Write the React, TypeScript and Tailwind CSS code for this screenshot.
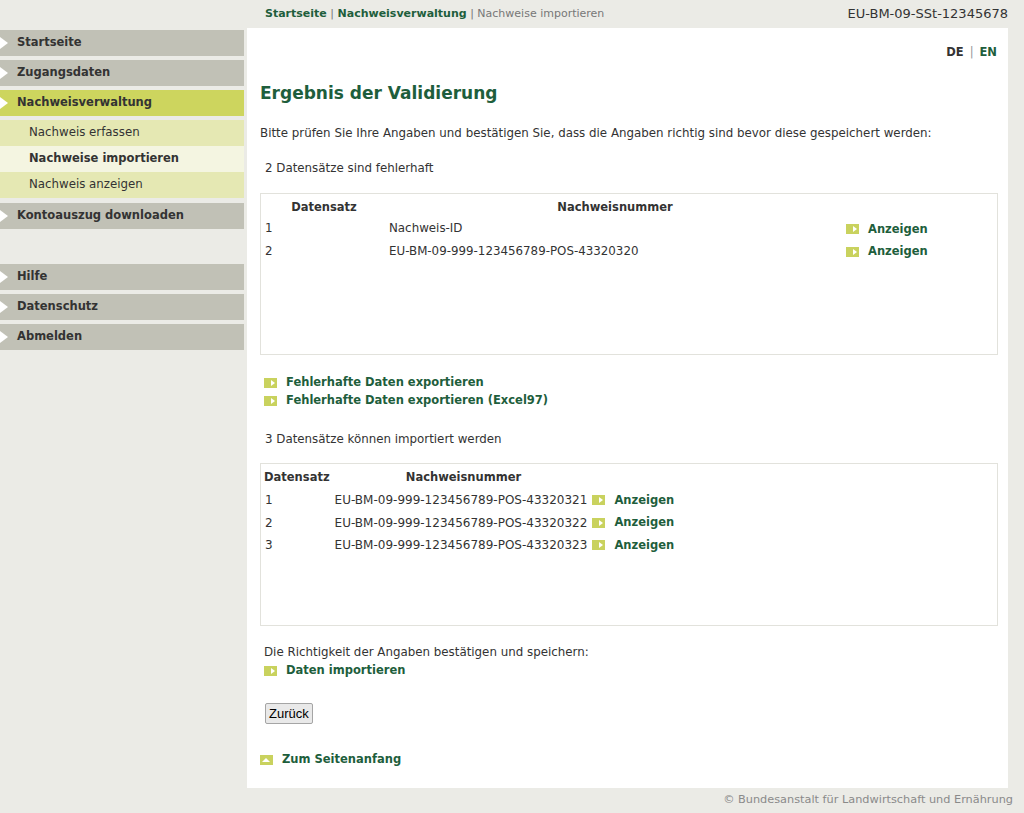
import React from 'react';

const navTop = ['Startseite', 'Zugangsdaten'];
const subItems = [
  { label: 'Nachweis erfassen', active: false },
  { label: 'Nachweise importieren', active: true },
  { label: 'Nachweis anzeigen', active: false },
];

function NavItem({ label, active }: { label: string; active?: boolean }) {
  return (
    <div
      className={`relative flex h-[26px] items-center pl-[17px] text-[11.5px] font-bold text-[#333] ${
        active ? 'bg-[#cdd55e]' : 'bg-[#c1c1b6]'
      }`}
    >
      {/* little white arrow at left edge */}
      <span className="absolute left-0 top-[7px] h-0 w-0 border-y-[6px] border-l-[8px] border-y-transparent border-l-white" />
      {label}
    </div>
  );
}

function ArrowIcon({ up }: { up?: boolean }) {
  return (
    <span className="inline-flex h-[10px] w-[13px] shrink-0 items-center justify-end bg-[#c9d25e] pr-[2px]">
      {up ? (
        <span className="mx-auto h-0 w-0 border-x-[4px] border-b-[4px] border-x-transparent border-b-white" />
      ) : (
        <span className="h-0 w-0 border-y-[3px] border-l-[4px] border-y-transparent border-l-white" />
      )}
    </span>
  );
}

function LinkItem({ label, up }: { label: string; up?: boolean }) {
  return (
    <div className="flex h-[18px] items-center gap-[9px] text-[11.5px] font-bold text-[#1e5e3c]">
      <ArrowIcon up={up} />
      <span>{label}</span>
    </div>
  );
}

const errorRows = [
  { n: '1', id: 'Nachweis-ID' },
  { n: '2', id: 'EU-BM-09-999-123456789-POS-43320320' },
];

const okRows = [
  { n: '1', id: 'EU-BM-09-999-123456789-POS-43320321' },
  { n: '2', id: 'EU-BM-09-999-123456789-POS-43320322' },
  { n: '3', id: 'EU-BM-09-999-123456789-POS-43320323' },
];

export default function App() {
  return (
    <div
      className="min-h-[813px] w-[1024px] bg-[#ebebe6] text-[11.85px] text-[#333]"
      style={{ fontFamily: '"DejaVu Sans", Verdana, sans-serif' }}
    >
      {/* Top bar */}
      <div className="flex h-[28px] items-center">
        <div className="w-[247px] shrink-0" />
        <div className="flex-1 pl-[18px] text-[11px]">
          <span className="font-bold text-[#1e5e3c]">Startseite</span>
          <span className="text-[#777]"> | </span>
          <span className="font-bold text-[#1e5e3c]">Nachweisverwaltung</span>
          <span className="text-[#777]"> | Nachweise importieren</span>
        </div>
        <div className="pr-[16px] text-[13px] text-[#333]">EU-BM-09-SSt-12345678</div>
      </div>

      <div className="flex">
        {/* Sidebar */}
        <div className="flex w-[244px] shrink-0 flex-col pt-[2px]">
          <div className="flex flex-col gap-[4px]">
            {navTop.map((l) => (
              <NavItem key={l} label={l} />
            ))}
            <NavItem label="Nachweisverwaltung" active />
          </div>
          <div className="mt-[4px] flex flex-col">
            {subItems.map((s) => (
              <div
                key={s.label}
                className={`flex h-[26px] items-center pl-[29px] ${
                  s.active
                    ? 'bg-[#f4f5e1] text-[11.5px] font-bold text-[#333]'
                    : 'bg-[#e5e8b3] text-[11.8px] text-[#333]'
                }`}
              >
                {s.label}
              </div>
            ))}
          </div>
          <div className="mt-[5px]">
            <NavItem label="Kontoauszug downloaden" />
          </div>
          <div className="mt-[35px] flex flex-col gap-[4px]">
            <NavItem label="Hilfe" />
            <NavItem label="Datenschutz" />
            <NavItem label="Abmelden" />
          </div>
        </div>

        {/* Main */}
        <div className="ml-[3px] h-[760px] w-[761px] bg-white pl-[13px] pr-[11px] pt-[17px]">
          <div className="flex h-[16px] items-center justify-end text-[11.5px] font-bold">
            <span className="text-[#333]">DE</span>
            <span className="mx-[6px] font-normal text-[#999]">|</span>
            <span className="text-[#1e5e3c]">EN</span>
          </div>

          <h1 className="mt-[20px] h-[24px] text-[17px] font-bold leading-[24px] text-[#1e5e3c]">
            Ergebnis der Validierung
          </h1>

          <p className="mt-[20px] leading-[16px]">
            Bitte prüfen Sie Ihre Angaben und bestätigen Sie, dass die Angaben richtig sind bevor diese gespeichert werden:
          </p>

          <p className="mt-[19px] pl-[5px] leading-[16px]">2 Datensätze sind fehlerhaft</p>

          <div className="mt-[17px] h-[162px] w-[738px] border border-[#e2e2dc] px-[2px] pt-[3px]">
            <table className="w-full table-fixed border-collapse">
              <colgroup>
                <col className="w-[122px]" />
                <col className="w-[460px]" />
                <col />
              </colgroup>
              <thead>
                <tr className="h-[21px]">
                  <th className="text-[11.5px] font-bold">Datensatz</th>
                  <th className="text-[11.5px] font-bold">Nachweisnummer</th>
                  <th />
                </tr>
              </thead>
              <tbody>
                {errorRows.map((r) => (
                  <tr key={r.n} className="h-[22.5px]">
                    <td className="pl-[2px] align-middle">{r.n}</td>
                    <td className="pl-[4px] align-middle">{r.id}</td>
                    <td className="pl-[1px] align-middle">
                      <LinkItem label="Anzeigen" />
                    </td>
                  </tr>
                ))}
              </tbody>
            </table>
          </div>

          <div className="mt-[19px] pl-[4px]">
            <LinkItem label="Fehlerhafte Daten exportieren" />
            <LinkItem label="Fehlerhafte Daten exportieren (Excel97)" />
          </div>

          <p className="mt-[21px] pl-[5px] leading-[16px]">3 Datensätze können importiert werden</p>

          <div className="mt-[16px] h-[163px] w-[738px] border border-[#e2e2dc] px-[3px] pt-[3px]">
            <table className="border-collapse">
              <thead>
                <tr className="h-[22px]">
                  <th className="pr-[5px] text-left text-[11.5px] font-bold">Datensatz</th>
                  <th className="text-[11.5px] font-bold">Nachweisnummer</th>
                  <th />
                </tr>
              </thead>
              <tbody>
                {okRows.map((r) => (
                  <tr key={r.n} className="h-[22.5px] text-[12px]">
                    <td className="pl-[1px] align-middle">{r.n}</td>
                    <td className="pr-[5px] align-middle">{r.id}</td>
                    <td className="align-middle">
                      <LinkItem label="Anzeigen" />
                    </td>
                  </tr>
                ))}
              </tbody>
            </table>
          </div>

          <p className="mt-[18px] pl-[4px] leading-[16px]">Die Richtigkeit der Angaben bestätigen und speichern:</p>
          <div className="mt-[2px] pl-[4px]">
            <LinkItem label="Daten importieren" />
          </div>

          <div className="mt-[23px] pl-[5px]">
            <button
              className="h-[21px] rounded-[2px] border border-[#a5a5a5] bg-[#e9e9e9] px-[3px] text-[13px] text-black"
              style={{ fontFamily: '"Liberation Sans", Arial, sans-serif' }}
            >
              Zurück
            </button>
          </div>

          <div className="mt-[27px]">
            <LinkItem label="Zum Seitenanfang" up />
          </div>
        </div>
      </div>

      {/* Footer */}
      <div className="flex h-[25px] items-center justify-end pr-[11px] text-[11.3px] text-[#8a8a8a]">
        © Bundesanstalt für Landwirtschaft und Ernährung
      </div>
    </div>
  );
}
